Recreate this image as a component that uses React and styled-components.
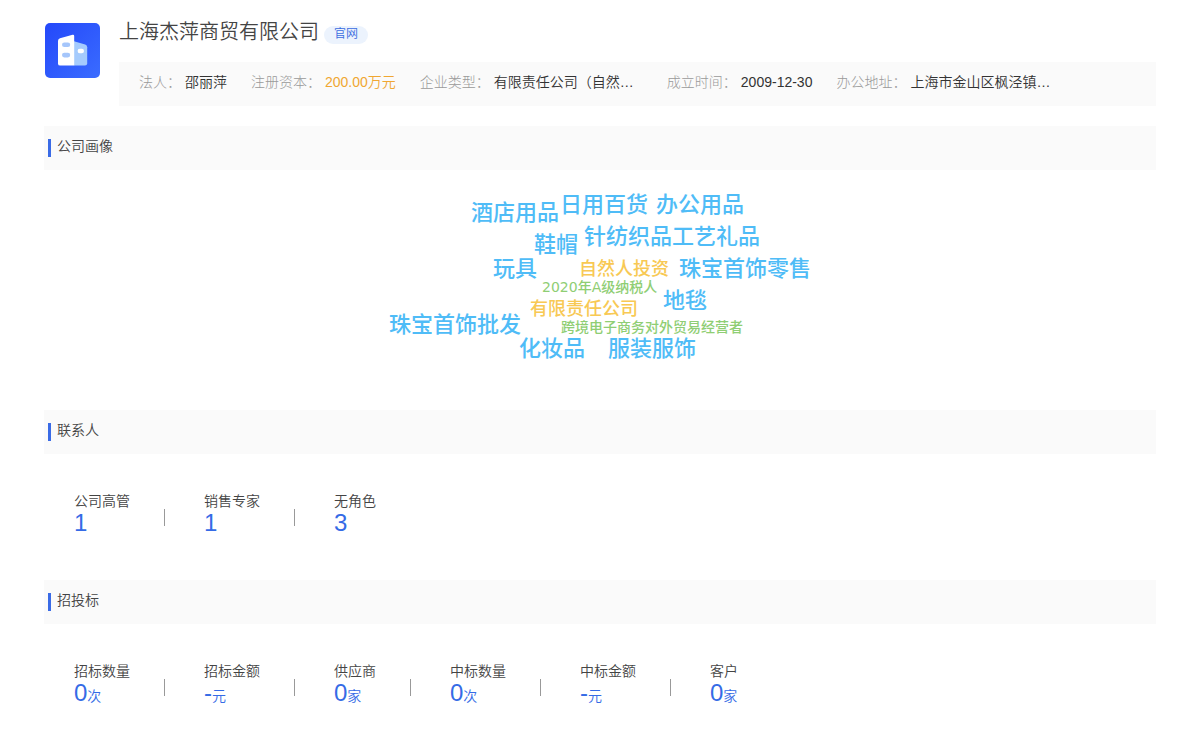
import React from 'react';
import styled, { createGlobalStyle } from 'styled-components';

const GlobalStyle = createGlobalStyle`
  * { box-sizing: border-box; }
  body {
    margin: 0;
    background: #fff;
    color: #444;
    font-family: "Liberation Sans", "Noto Sans CJK SC", sans-serif;
    font-size: 14px;
    font-weight: 350;
    line-height: 20px;
  }
  h1, h2, dl, dd, ul { margin: 0; padding: 0; font-weight: inherit; }
`;

const Page = styled.main`
  padding: 20px 44px 24px;
`;

const Header = styled.header`
  display: flex;
  gap: 19px;
  margin-bottom: 20px;
  padding-left: 1px;
`;

const Logo = styled.svg`
  flex: none;
  width: 55px;
  height: 55px;
  margin-top: 3px;
`;

const HeaderBody = styled.div`
  flex: 1;
  min-width: 0;
`;

const TitleRow = styled.div`
  display: flex;
  align-items: flex-start;
  gap: 5px;
  height: 42px;
`;

const CompanyName = styled.h1`
  font-size: 20px;
  line-height: 24px;
  color: #444;
`;

const SiteLink = styled.a`
  margin-top: 6px;
  padding: 0 10px;
  border-radius: 9px;
  background: #ecf3fd;
  color: #3a6be0;
  font-size: 12px;
  line-height: 17px;
  padding-bottom: 1px;
  text-decoration: none;
`;

const InfoBar = styled.dl`
  display: flex;
  flex-wrap: wrap;
  gap: 4px 24px;
  padding: 10px 20px 14px;
  background: #fafafa;
`;

const InfoItem = styled.div`
  display: flex;
  gap: 4px;
`;

const InfoLabel = styled.dt`
  color: #999;
  font-weight: 300;
`;

const InfoValue = styled.dd`
  min-width: ${(p) => (p.$wide ? '149px' : '0')};
  color: ${(p) => (p.$accent ? '#f0a732' : '#333')};
  white-space: nowrap;
`;

const SectionTitle = styled.h2`
  display: flex;
  align-items: flex-start;
  gap: 6px;
  height: 44px;
  padding: 10px 4px;
  background: #fafafa;
  color: #444;
  font-size: 14px;
  line-height: 20px;

  &::before {
    content: "";
    width: 3px;
    height: 18px;
    margin-top: 3px;
    background: #3a6be6;
  }
`;

const Cloud = styled.ul`
  position: relative;
  width: 440px;
  height: 240px;
  margin: 0 auto;
  list-style: none;
  font-family: "DejaVu Sans", "Noto Sans CJK SC", sans-serif;
  font-weight: 500;
`;

const wordKinds = {
  product: { size: 22, color: '#4fbcf7' },
  nature: { size: 18, color: '#f8c954' },
  label: { size: 14, color: '#8fce74' },
};

const Word = styled.li`
  position: absolute;
  left: ${(p) => p.$x}px;
  top: ${(p) => p.$y}px;
  color: ${(p) => wordKinds[p.$kind].color};
  font-size: ${(p) => wordKinds[p.$kind].size}px;
  line-height: 24px;
  white-space: nowrap;
`;

const Stats = styled.dl`
  display: flex;
  padding: 36px 30px 44px;
`;

const Stat = styled.div`
  display: flex;
  flex-direction: column;

  & + & {
    position: relative;
    margin-left: 34px;
    padding-left: 40px;
  }

  & + &::before {
    content: "";
    position: absolute;
    left: 0;
    top: 19px;
    width: 1px;
    height: 17px;
    background: #999;
  }
`;

const StatLabel = styled.dt`
  line-height: 22px;
  color: #444;
`;

const StatValue = styled.dd`
  height: 24px;
  color: #356be6;
  font-size: 24px;
  line-height: 22px;
`;

const Unit = styled.span`
  font-size: 14px;
`;

const info = [
  { label: '法人', value: '邵丽萍' },
  { label: '注册资本', value: '200.00万元', accent: true },
  { label: '企业类型', value: '有限责任公司（自然…', wide: true },
  { label: '成立时间', value: '2009-12-30' },
  { label: '办公地址', value: '上海市金山区枫泾镇…', wide: true },
];

const words = [
  { text: '酒店用品', kind: 'product', x: 91, y: 31 },
  { text: '日用百货', kind: 'product', x: 180, y: 23 },
  { text: '办公用品', kind: 'product', x: 276, y: 23 },
  { text: '鞋帽', kind: 'product', x: 154, y: 63 },
  { text: '针纺织品工艺礼品', kind: 'product', x: 204, y: 55 },
  { text: '玩具', kind: 'product', x: 113, y: 87 },
  { text: '自然人投资', kind: 'nature', x: 199, y: 87 },
  { text: '珠宝首饰零售', kind: 'product', x: 299, y: 87 },
  { text: '2020年A级纳税人', kind: 'label', x: 162, y: 105 },
  { text: '有限责任公司', kind: 'nature', x: 150, y: 127 },
  { text: '地毯', kind: 'product', x: 283, y: 119 },
  { text: '珠宝首饰批发', kind: 'product', x: 9, y: 143 },
  { text: '跨境电子商务对外贸易经营者', kind: 'label', x: 181, y: 145 },
  { text: '化妆品', kind: 'product', x: 139, y: 167 },
  { text: '服装服饰', kind: 'product', x: 228, y: 167 },
];

const contacts = [
  { label: '公司高管', value: '1' },
  { label: '销售专家', value: '1' },
  { label: '无角色', value: '3' },
];

const bids = [
  { label: '招标数量', value: '0', unit: '次' },
  { label: '招标金额', value: '-', unit: '元' },
  { label: '供应商', value: '0', unit: '家' },
  { label: '中标数量', value: '0', unit: '次' },
  { label: '中标金额', value: '-', unit: '元' },
  { label: '客户', value: '0', unit: '家' },
];

function CompanyLogo() {
  return (
    <Logo viewBox="0 0 55 55" aria-hidden="true">
      <defs>
        <linearGradient id="logoBg" x1="0" y1="0" x2="1" y2="1">
          <stop offset="0" stopColor="#2448fa" />
          <stop offset="1" stopColor="#3a6cff" />
        </linearGradient>
      </defs>
      <rect width="55" height="55" rx="5" fill="url(#logoBg)" />
      <path d="M29 18.2 L40.2 21.6 Q42.2 22.3 42.2 24.3 V40.5 Q42.2 42.6 40 42.6 H29 Z" fill="#a5cbfd" />
      <path d="M15 15.3 L27.6 11.8 Q29.2 11.5 29.2 13.1 V42.6 H15.2 Q13 42.6 13 40.4 V17.8 Q13 15.9 15 15.3 Z" fill="#fff" />
      <rect x="17" y="19.4" width="8.2" height="4.6" rx="2.3" fill="#a5c6fb" />
      <rect x="17" y="29.8" width="8.2" height="4.6" rx="2.3" fill="#a5c6fb" />
      <rect x="32.6" y="25.8" width="6.4" height="4.4" rx="2.2" fill="#fff" />
    </Logo>
  );
}

function StatList({ items }) {
  return (
    <Stats>
      {items.map((s) => (
        <Stat key={s.label}>
          <StatLabel>{s.label}</StatLabel>
          <StatValue>
            {s.value}
            {s.unit && <Unit>{s.unit}</Unit>}
          </StatValue>
        </Stat>
      ))}
    </Stats>
  );
}

export default function App() {
  return (
    <>
      <GlobalStyle />
      <Page lang="zh-CN">
        <Header>
          <CompanyLogo />
          <HeaderBody>
            <TitleRow>
              <CompanyName>上海杰萍商贸有限公司</CompanyName>
              <SiteLink href="#site">官网</SiteLink>
            </TitleRow>
            <InfoBar>
              {info.map((i) => (
                <InfoItem key={i.label}>
                  <InfoLabel>{i.label}：</InfoLabel>
                  <InfoValue $accent={i.accent} $wide={i.wide}>{i.value}</InfoValue>
                </InfoItem>
              ))}
            </InfoBar>
          </HeaderBody>
        </Header>
        <section>
          <SectionTitle>公司画像</SectionTitle>
          <Cloud>
            {words.map((w) => (
              <Word key={w.text} $kind={w.kind} $x={w.x} $y={w.y}>{w.text}</Word>
            ))}
          </Cloud>
        </section>
        <section>
          <SectionTitle>联系人</SectionTitle>
          <StatList items={contacts} />
        </section>
        <section>
          <SectionTitle>招投标</SectionTitle>
          <StatList items={bids} />
        </section>
      </Page>
    </>
  );
}
